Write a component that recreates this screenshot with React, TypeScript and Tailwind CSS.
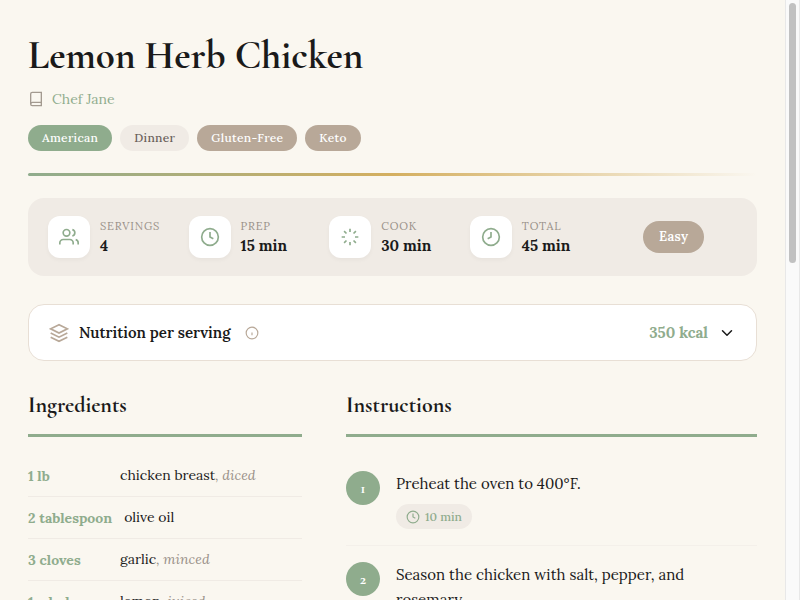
import type { ReactNode } from "react";
import { ChevronDown } from "lucide-react";

// --- Types & Data ---
interface Ingredient {
  qty: string;
  name: string;
  note?: string;
}

interface Step {
  text: string;
  time?: string;
}

const tags = [
  { label: "American", className: "bg-[#8fac8d] text-white" },
  { label: "Dinner", className: "bg-[#f0ebe5] text-[#6b625c]" },
  { label: "Gluten-Free", className: "bg-[#b8a898] text-white" },
  { label: "Keto", className: "bg-[#b8a898] text-white" },
];

const ingredients: Ingredient[] = [
  { qty: "1 lb", name: "chicken breast", note: "diced" },
  { qty: "2 tablespoon", name: "olive oil" },
  { qty: "3 cloves", name: "garlic", note: "minced" },
  { qty: "1 whole", name: "lemon", note: "juiced" },
];

const steps: Step[] = [
  { text: "Preheat the oven to 400°F.", time: "10 min" },
  { text: "Season the chicken with salt, pepper, and rosemary." },
];

// --- Icons ---
const Icon = ({ className, children }: { className: string; children: ReactNode }) => (
  <svg
    viewBox="0 0 24 24"
    fill="none"
    stroke="currentColor"
    strokeWidth="2"
    className={`shrink-0 ${className}`}
    aria-hidden="true"
  >
    {children}
  </svg>
);

const clockShape = (
  <>
    <circle cx="12" cy="12" r="10" />
    <polyline points="12 6 12 12 16 14" />
  </>
);

const stats = [
  {
    label: "Servings",
    value: "4",
    icon: (
      <>
        <path d="M17 21v-2a4 4 0 0 0-4-4H5a4 4 0 0 0-4 4v2" />
        <circle cx="9" cy="7" r="4" />
        <path d="M23 21v-2a4 4 0 0 0-3-3.87" />
        <path d="M16 3.13a4 4 0 0 1 0 7.75" />
      </>
    ),
  },
  { label: "Prep", value: "15 min", icon: clockShape },
  {
    label: "Cook",
    value: "30 min",
    icon: (
      <path d="M12 2v4M12 18v4M4.93 4.93l2.83 2.83M16.24 16.24l2.83 2.83M2 12h4M18 12h4M4.93 19.07l2.83-2.83M16.24 7.76l2.83-2.83" />
    ),
  },
  {
    label: "Total",
    value: "45 min",
    icon: (
      <>
        <circle cx="12" cy="12" r="10" />
        <polyline points="12 6 12 12 8 14" />
      </>
    ),
  },
];

// --- UI Components ---
const SectionTitle = ({ children }: { children: ReactNode }) => (
  <h2 className="mb-[18px] border-b-[3px] border-[#8fac8d] pb-3 font-['Cormorant_Garamond','Liberation_Serif',serif] text-[22px] leading-[33px] font-bold">
    {children}
  </h2>
);

export default function App() {
  return (
    <div className="flex h-screen overflow-hidden bg-[#faf7f0] font-['Lora','Liberation_Serif',serif] text-[#1a1a1a]">
      <main className="min-w-0 flex-1 overflow-y-auto px-7 pt-7 [scrollbar-width:none]">
        <header>
          <h1 className="font-['Cormorant_Garamond','Liberation_Serif',serif] text-[39px] leading-[56px] font-bold">
            Lemon Herb Chicken
          </h1>
          <div className="mt-1 flex h-[22px] items-center gap-2">
            <Icon className="size-4 text-[#a39a90]">
              <path d="M4 19.5A2.5 2.5 0 0 1 6.5 17H20" />
              <path d="M6.5 2H20v20H6.5A2.5 2.5 0 0 1 4 19.5v-15A2.5 2.5 0 0 1 6.5 2z" />
            </Icon>
            <a href="#author" className="text-sm text-[#8fac8d]">Chef Jane</a>
          </div>
          <ul className="mt-[15px] flex flex-wrap gap-2">
            {tags.map((tag) => (
              <li
                key={tag.label}
                className={`flex h-[26px] items-center rounded-full px-3.5 text-xs font-medium tracking-wide ${tag.className}`}
              >
                {tag.label}
              </li>
            ))}
          </ul>
          <div className="mt-[22px] h-[3px] rounded-sm bg-[linear-gradient(90deg,#8fac8d,#d4af60_50%,transparent)]" />
        </header>

        {/* Stats bar */}
        <section className="mt-[22px] grid grid-cols-5 items-center gap-3.5 rounded-2xl bg-[#f0ebe5] px-5 py-[18px]">
          {stats.map((stat) => (
            <div key={stat.label} className="flex items-center gap-2.5">
              <div className="flex size-[42px] shrink-0 items-center justify-center rounded-xl bg-white text-[#8fac8d] shadow-[0_2px_4px_rgba(0,0,0,0.04)]">
                <Icon className="size-5">{stat.icon}</Icon>
              </div>
              <div className="whitespace-nowrap">
                <div className="text-[11px] leading-[18px] tracking-[0.8px] text-[#9a928a] uppercase">{stat.label}</div>
                <div className="text-[15px] leading-[22px] font-bold">{stat.value}</div>
              </div>
            </div>
          ))}
          <span className="justify-self-center rounded-full bg-[#b8a898] px-4 py-[5px] text-[13px] leading-[22px] font-semibold tracking-wide text-white">
            Easy
          </span>
        </section>

        {/* Nutrition */}
        <button
          type="button"
          className="mt-7 flex h-[57px] w-full items-center rounded-2xl border border-[#e8dfd5] bg-white px-5 text-left text-[15px] leading-[23px]"
        >
          <Icon className="size-5 text-[#b8a898]">
            <path d="M12 2 2 7l10 5 10-5-10-5z" />
            <path d="m2 17 10 5 10-5" />
            <path d="m2 12 10 5 10-5" />
          </Icon>
          <span className="ml-2.5 font-semibold">Nutrition per serving</span>
          <Icon className="ml-3.5 size-3.5 text-[#b8a898]">
            <circle cx="12" cy="12" r="10" />
            <path d="M12 16v-5M12 8h.01" />
          </Icon>
          <span className="ml-auto font-bold text-[#8fac8d]">350 kcal</span>
          <ChevronDown className="ml-2.5 size-[18px]" />
        </button>

        <div className="mt-7 grid grid-cols-[2fr_3fr] gap-11">
          <section>
            <SectionTitle>Ingredients</SectionTitle>
            <ul>
              {ingredients.map((item) => (
                <li key={item.name} className="flex h-[42px] gap-3 border-b border-[#f0ebe5] pt-2.5 text-sm">
                  <span className="min-w-20 leading-[22px] font-bold text-[#8fac8d]">{item.qty}</span>
                  <span className="leading-5">
                    {item.name}
                    {item.note && <span className="text-[#9a928a] italic">, {item.note}</span>}
                  </span>
                </li>
              ))}
            </ul>
          </section>

          <section>
            <SectionTitle>Instructions</SectionTitle>
            <ol>
              {steps.map((step, i) => (
                <li key={step.text} className="flex items-start gap-4 border-b border-[#f4f0ea] py-4">
                  <span className="flex size-[34px] shrink-0 items-center justify-center rounded-full bg-[#8fac8d] font-['Cormorant_Garamond','Liberation_Serif',serif] text-base font-bold text-white">
                    {i + 1}
                  </span>
                  <div>
                    <p className="text-[15px] leading-[25px]">{step.text}</p>
                    {step.time && (
                      <span className="mt-2 flex h-[25px] w-fit items-center gap-[5px] rounded-full bg-[#f0ebe5] px-2.5 text-xs font-medium text-[#8fac8d]">
                        <Icon className="size-3.5">{clockShape}</Icon>
                        {step.time}
                      </span>
                    )}
                  </div>
                </li>
              ))}
            </ol>
          </section>
        </div>
      </main>

      {/* Scroll track */}
      <div className="w-[15px] shrink-0 border-x border-[#e8e8e8] bg-[#fafafa] px-[3px] pt-[3px]" aria-hidden="true">
        <div className="h-[260px] rounded-full bg-[#c1c1c1]" />
      </div>
    </div>
  );
}
